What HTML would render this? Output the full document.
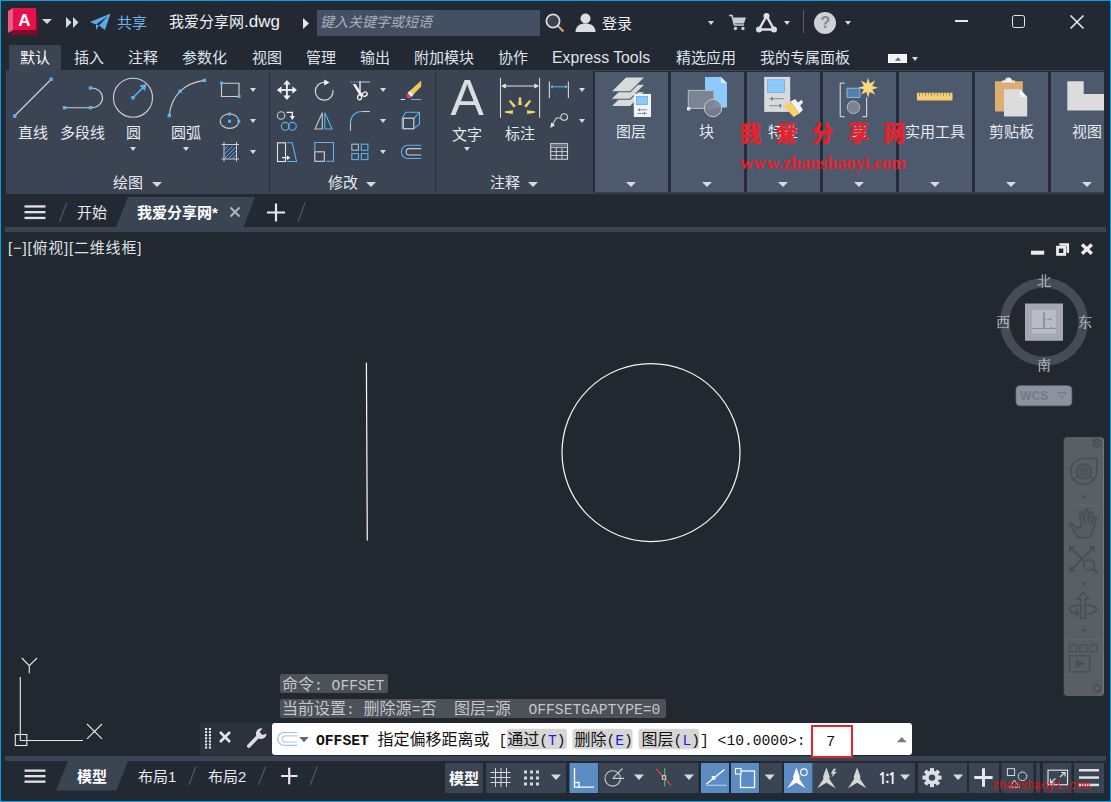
<!DOCTYPE html>
<html lang="zh-CN">
<head>
<meta charset="utf-8">
<title>我爱分享网.dwg</title>
<style>
*{box-sizing:border-box;margin:0;padding:0}
html,body{width:1111px;height:802px;overflow:hidden;background:#222933}
body{font-family:"Liberation Sans","Noto Sans CJK SC",sans-serif;color:#e8eaee;font-size:15px;position:relative}
.a{position:absolute}
.t{position:absolute;white-space:nowrap;line-height:1}
svg{position:absolute;overflow:visible}
#win{position:absolute;left:0;top:0;width:1111px;height:802px;background:#222933}
.menu{top:50px;font-size:15px;color:#dfe3ea}
.plabel{font-size:15px;color:#e6e9ee}
.panelL{position:absolute;top:72px;height:120px;background:#4d596c}
.tri{position:absolute;width:0;height:0;margin-left:.5px;border-left:3.5px solid transparent;border-right:3.5px solid transparent;border-top:4px solid #d6d9de}
.tri5{position:absolute;width:0;height:0;border-left:5px solid transparent;border-right:5px solid transparent;border-top:5px solid #d6d9de}
.tri6{position:absolute;width:0;height:0;margin-left:1px;margin-top:1px;border-left:5px solid transparent;border-right:5px solid transparent;border-top:5.500px solid #d6d9de}
.cmp{font-size:14px;color:#c8cbd0;font-family:"Liberation Serif","Noto Serif CJK SC",serif}
.cl{font-family:"Liberation Mono","Noto Sans CJK SC",monospace;font-size:14.670px;line-height:16px}
.cj{font-family:"Noto Sans CJK SC",sans-serif;font-size:16px;line-height:16px}
.k{font-style:normal;color:#1a1ae0}
.mono{font-family:"Liberation Mono","Noto Sans CJK SC",monospace}
</style>
</head>
<body>
<div id="win">
<!-- SECTION:TITLE -->
<!-- app logo -->
<svg style="left:8px;top:8px" width="31" height="28" viewBox="0 0 31 28">
<polygon points="3,3 30,5 30,27 3,27" fill="#7d0b2a"/>
<polygon points="0,3 5,0 5,22 0,25" fill="#ee5b82"/>
<rect x="5" y="0" width="23" height="22" fill="#e6114c"/>
<text x="16.5" y="18" font-family="Liberation Sans" font-weight="bold" font-size="17" fill="#fff" text-anchor="middle">A</text>
</svg>
<div class="tri5" style="left:42px;top:19px"></div>
<svg style="left:66px;top:17px" width="13" height="11" viewBox="0 0 13 11"><polygon points="0,0 5.5,5.5 0,11" fill="#d6d9de"/><polygon points="7,0 12.5,5.5 7,11" fill="#d6d9de"/></svg>
<svg style="left:90px;top:13px" width="21" height="18" viewBox="0 0 21 18"><polygon points="0,9 20.5,0.5 15,17 9,12.5 6,17 6,11.5" fill="#5aa9e8"/><polygon points="6,11.5 18,3 9,12.5" fill="#222933"/></svg>
<div class="t" style="left:117px;top:15px;font-size:15px;color:#6cb3ec">共享</div>
<div class="t" style="left:169px;top:13px;font-size:15px;color:#f0f1f4">我爱分享网<span style="font-size:17px">.dwg</span></div>
<svg style="left:303px;top:18px" width="6" height="11" viewBox="0 0 6 11"><polygon points="0,0 6,5.5 0,11" fill="#e6e8ec"/></svg>
<div class="a" style="left:317px;top:10px;width:223px;height:26px;background:#454f63"></div>
<div class="t" style="left:320px;top:15px;font-size:14px;color:#a9aeb8;font-style:italic">键入关键字或短语</div>
<svg style="left:545px;top:13px" width="21" height="20" viewBox="0 0 21 20"><line x1="12.5" y1="12.5" x2="18.5" y2="18.5" stroke="#d9a470" stroke-width="2.2"/><circle cx="8" cy="8" r="6.6" fill="#3a4250" stroke="#d8dade" stroke-width="1.8"/></svg>
<svg style="left:575px;top:13px" width="21" height="20" viewBox="0 0 21 20"><circle cx="10.5" cy="5.5" r="5" fill="#dcdee2"/><path d="M0.5 19 C0.5 13 5 10.5 10.5 10.5 C16 10.5 20.5 13 20.5 19 Z" fill="#dcdee2"/></svg>
<div class="t" style="left:602px;top:15.5px;font-size:15px;color:#f0f1f4">登录</div>
<div class="tri" style="left:707px;top:21px"></div>
<svg style="left:729px;top:14px" width="18" height="17" viewBox="0 0 18 17"><path d="M0 1.5 H3 L5.5 11 H15" fill="none" stroke="#c9ccd2" stroke-width="1.6"/><polygon points="4,3.5 17,3.5 15,9.5 5.5,9.5" fill="#c9ccd2"/><circle cx="6.5" cy="14.5" r="1.7" fill="#c9ccd2"/><circle cx="14" cy="14.5" r="1.7" fill="#c9ccd2"/></svg>
<svg style="left:755px;top:12px" width="23" height="21" viewBox="0 0 23 21"><polygon points="11.5,4 4,17.5 19,17.5" fill="none" stroke="#dcdee2" stroke-width="2.4"/><circle cx="11.5" cy="4" r="3" fill="#dcdee2"/><circle cx="4" cy="17.5" r="3" fill="#dcdee2"/><circle cx="19" cy="17.5" r="3" fill="#dcdee2"/></svg>
<div class="tri" style="left:783px;top:21px"></div>
<div class="a" style="left:803px;top:10px;width:1px;height:23px;background:#555d6a"></div>
<div class="a" style="left:814px;top:12px;width:22px;height:22px;border-radius:11px;background:#cfd1d6"></div>
<div class="t" style="left:820.500px;top:15px;font-size:16px;font-weight:bold;color:#808590">?</div>
<div class="tri" style="left:844px;top:21px"></div>
<div class="a" style="left:955px;top:20.400px;width:12.500px;height:1.500px;background:#e6e8ec"></div>
<div class="a" style="left:1012px;top:15px;width:13px;height:13px;border:1.800px solid #e6e8ec;border-radius:2.500px"></div>
<svg style="left:1070px;top:15px" width="14" height="14" viewBox="0 0 14 14"><path d="M0.5 0.5 L13.5 13.5 M13.5 0.5 L0.5 13.5" stroke="#e6e8ec" stroke-width="1.6"/></svg>
<!-- SECTION:MENU -->
<div class="a" style="left:9px;top:45px;width:52px;height:26px;background:#3b4453"></div>
<div class="t menu" style="left:20px;color:#fff">默认</div>
<div class="t menu" style="left:74px">插入</div>
<div class="t menu" style="left:128px">注释</div>
<div class="t menu" style="left:182px">参数化</div>
<div class="t menu" style="left:252px">视图</div>
<div class="t menu" style="left:306px">管理</div>
<div class="t menu" style="left:360px">输出</div>
<div class="t menu" style="left:414px">附加模块</div>
<div class="t menu" style="left:498px">协作</div>
<div class="t menu" style="left:552px;font-size:15.800px;top:50px">Express Tools</div>
<div class="t menu" style="left:676px">精选应用</div>
<div class="t menu" style="left:760px">我的专属面板</div>
<div class="a" style="left:888px;top:54px;width:19px;height:9px;background:#f2f2f2;border:1px solid #fff"></div>
<svg style="left:894.500px;top:57px" width="6" height="4" viewBox="0 0 6 4"><polygon points="0,3.700 3,0.300 6,3.700" fill="#6a6a6a"/></svg>
<div class="tri" style="left:911px;top:57px"></div>
<!-- SECTION:RIBBON -->
<div class="a" style="left:6px;top:70px;width:1098px;height:124px;background:#3b4453"></div>
<div class="a" style="left:593px;top:71px;width:511px;height:123px;background:#252c37"></div>
<div class="a" style="left:593px;top:192px;width:511px;height:1.500px;background:#343d4b"></div>
<div class="a" style="left:269px;top:72px;width:1px;height:120px;background:#2a303b"></div>
<div class="a" style="left:435px;top:72px;width:1px;height:120px;background:#2a303b"></div>
<!-- draw panel -->
<svg style="left:0;top:0" width="270" height="200" viewBox="0 0 270 200">
<g fill="none" stroke="#cbcdd2" stroke-width="1.150">
<line x1="14.5" y1="116" x2="51" y2="79.5"/>
<path d="M64.5 107.7 H90.5 C106.5 107.7 106.5 88 90.5 88"/>
<circle cx="133" cy="97.7" r="19.5"/>
<path d="M169.3 115.5 C171 96 184 83 204.4 80.4"/>
<path d="M221.5 83 V96.5 H239 M221.5 83.2 H239 V96.5"/>
<ellipse cx="229.5" cy="121.2" rx="9.3" ry="7.2"/>
<path d="M221.5 144.5 H239 M221.5 159 H239 M224 142 V161.500 M236.500 142 V161.500" stroke-width="1"/>
</g>
<line x1="133" y1="97.700" x2="143" y2="87.500" stroke="#5db1f0" stroke-width="1.600"/>
<polygon points="146.500,84 145,91 139.500,85.500" fill="#5db1f0"/>
<path d="M224 150 L228 146 M224 154.500 L232.500 146 M224.500 158.400 L236 146.900 M228.500 158.400 L236 150.900 M232.500 158.400 L236 154.900" stroke="#5db1f0" stroke-width="1"/>
<g fill="#5db1f0">
<rect x="13" y="114.500" width="3.400" height="3.400"/><rect x="49.500" y="77.500" width="3.400" height="3.400"/>
<rect x="62.800" y="106" width="3.400" height="3.400"/><rect x="88.800" y="106" width="3.400" height="3.400"/><rect x="88.800" y="86.300" width="3.400" height="3.400"/>
<rect x="131.300" y="96" width="3.400" height="3.400"/>
<rect x="167.600" y="113.800" width="3.400" height="3.400"/><rect x="178.300" y="89.500" width="3.400" height="3.400"/><rect x="202.700" y="78.700" width="3.400" height="3.400"/>
<rect x="220" y="81.500" width="3" height="3"/><rect x="237.500" y="95" width="3" height="3"/>
<rect x="228" y="112.500" width="3" height="3"/><rect x="228" y="119.700" width="3" height="3"/><rect x="237.300" y="119.700" width="3" height="3"/>
</g>
</svg>
<div class="t plabel" style="left:18px;top:125px">直线</div>
<div class="t plabel" style="left:60px;top:125px">多段线</div>
<div class="t plabel" style="left:126px;top:125px">圆</div>
<div class="t plabel" style="left:171px;top:125px">圆弧</div>
<div class="tri" style="left:129px;top:147px"></div>
<div class="tri" style="left:182px;top:147px"></div>
<div class="tri" style="left:249px;top:88px"></div>
<div class="tri" style="left:249px;top:119px"></div>
<div class="tri" style="left:249px;top:150px"></div>
<div class="t plabel" style="left:113px;top:175px">绘图</div>
<div class="tri6" style="left:151px;top:181px"></div>
<!-- RIBBON:MODIFY -->
<svg style="left:0;top:0" width="440" height="200" viewBox="0 0 440 200">
<!-- move -->
<g fill="#f2f3f5"><rect x="286" y="83" width="1.800" height="14"/><rect x="280" y="89.100" width="14" height="1.800"/>
<polygon points="286.900,80 290.600,84.600 283.200,84.600"/><polygon points="286.900,100 290.600,95.400 283.200,95.400"/>
<polygon points="276.900,90 281.500,86.300 281.500,93.700"/><polygon points="296.900,90 292.300,86.300 292.300,93.700"/></g>
<!-- rotate -->
<path d="M333 90 A8.900 8.900 0 1 1 324.500 82.400" fill="none" stroke="#d4d6da" stroke-width="1.200"/>
<polygon points="324.200,79.600 329.500,82.600 324.200,85.600" fill="#f2f3f5"/>
<!-- trim -->
<line x1="350.300" y1="82" x2="359" y2="82" stroke="#5db1f0" stroke-width="1.200" stroke-dasharray="2 1"/>
<line x1="360.500" y1="82" x2="369.800" y2="82" stroke="#aeb2b9" stroke-width="1.200"/>
<line x1="360" y1="81" x2="360" y2="91.500" stroke="#f2f3f5" stroke-width="1.400"/>
<polygon points="352.700,84 355.500,84 362.500,94.500 360,96" fill="#f2f3f5"/>
<ellipse cx="359.600" cy="97.300" rx="2" ry="2.500" fill="none" stroke="#f2f3f5" stroke-width="1.300"/>
<ellipse cx="364.800" cy="94.200" rx="2.500" ry="2" fill="none" stroke="#f2f3f5" stroke-width="1.300" transform="rotate(-30 364.800 94.200)"/>
<!-- erase -->
<polygon points="421.200,80.500 421.200,86.500 412,96 408,92.500" fill="#f2c45c"/>
<polygon points="409.800,91 413.500,94.800 411.300,97 407.600,93.200" fill="#f6f6f6"/>
<path d="M407.600 93.200 L411.300 97 C409 100 404.500 97.500 407.600 93.200Z" fill="#e8404f"/>
<line x1="400.800" y1="99.500" x2="405" y2="99.500" stroke="#e8e9ec" stroke-width="1"/>
<line x1="411" y1="99.500" x2="421.300" y2="99.500" stroke="#5db1f0" stroke-width="1"/>
<!-- copy -->
<circle cx="281.100" cy="115.500" r="3.700" fill="none" stroke="#c8cacf" stroke-width="1.100"/>
<path d="M286.500 112.400 H292.300 V116.500" fill="none" stroke="#f2f3f5" stroke-width="1.300"/>
<polygon points="289.800,116 294.800,116 292.300,120" fill="#f2f3f5"/>
<circle cx="285.200" cy="126.300" r="3.900" fill="none" stroke="#5db1f0" stroke-width="1.100"/>
<circle cx="292.400" cy="126.300" r="3.900" fill="none" stroke="#5db1f0" stroke-width="1.100"/>
<!-- mirror -->
<polygon points="315,129 322.300,129 322.300,112.800" fill="none" stroke="#c8cacf" stroke-width="1.100"/>
<polygon points="324.800,112.800 324.800,129 332,129" fill="none" stroke="#5db1f0" stroke-width="1.100"/>
<!-- fillet -->
<path d="M350.500 130.700 V122.500" fill="none" stroke="#c8cacf" stroke-width="1.100"/>
<path d="M350.500 122.500 A11 11 0 0 1 361.500 111.500" fill="none" stroke="#5db1f0" stroke-width="1.100"/>
<path d="M361.500 111.500 H369.800" fill="none" stroke="#c8cacf" stroke-width="1.100"/>
<!-- box -->
<path d="M402.200 118.200 L405.800 112.300 H419.500 V124 L414 128.700 M414 118.200 L419.500 112.300 M402.200 118.200 V128.700" fill="none" stroke="#5db1f0" stroke-width="1.100"/>
<rect x="403.300" y="118.200" width="10.500" height="10.500" fill="none" stroke="#c8cacf" stroke-width="1.300"/>
<!-- stretch -->
<rect x="277.500" y="142.800" width="8" height="18.700" fill="none" stroke="#e2e3e6" stroke-width="1.100"/>
<path d="M287.200 142.800 H292.300 L296.500 161.500 H287.200" fill="none" stroke="#5db1f0" stroke-width="1.100"/>
<line x1="282" y1="157.700" x2="288" y2="157.700" stroke="#f2f3f5" stroke-width="1.200"/>
<polygon points="287,155.500 290.300,157.700 287,159.900" fill="#f2f3f5"/>
<!-- scale -->
<path d="M314.800 151 V142.500 H333.500 V161.300 H326" fill="none" stroke="#5db1f0" stroke-width="1.100"/>
<rect x="314.800" y="151.800" width="9.500" height="9.500" fill="none" stroke="#d4d6da" stroke-width="1.100"/>
<!-- array -->
<rect x="351.800" y="144.200" width="6.600" height="6" fill="none" stroke="#aeb2b9" stroke-width="1.200"/>
<rect x="361.300" y="144.200" width="6.600" height="6" fill="none" stroke="#5db1f0" stroke-width="1.100"/>
<rect x="351.800" y="153.600" width="6.600" height="6" fill="none" stroke="#5db1f0" stroke-width="1.100"/>
<rect x="361.300" y="153.600" width="6.600" height="6" fill="none" stroke="#5db1f0" stroke-width="1.100"/>
<!-- offset -->
<path d="M421.200 145.300 H408 A6.600 6.600 0 0 0 408 158.500 H421.200" fill="none" stroke="#5db1f0" stroke-width="1.100"/>
<path d="M421.200 148.600 H409.300 A3.200 3.200 0 0 0 409.300 155 H421.200" fill="none" stroke="#c8cacf" stroke-width="1.100"/>
</svg>
<div class="tri" style="left:379px;top:88px"></div>
<div class="tri" style="left:379px;top:119px"></div>
<div class="tri" style="left:379px;top:150px"></div>
<div class="t plabel" style="left:328px;top:175px">修改</div>
<div class="tri6" style="left:365px;top:181px"></div>
<!-- RIBBON:ANNOT -->
<svg style="left:0;top:0" width="600" height="200" viewBox="0 0 600 200">
<text x="467.300" y="115.200" font-family="Liberation Sans" font-size="50" fill="#dcdde0" text-anchor="middle">A</text>
<g stroke="#d4d6da" stroke-width="1.100" fill="none">
<line x1="500.500" y1="78" x2="500.500" y2="117.800"/><line x1="539.600" y1="78" x2="539.600" y2="117.800"/>
<line x1="504" y1="86" x2="536" y2="86"/>
<line x1="549.400" y1="81.400" x2="549.400" y2="98"/><line x1="568.400" y1="81.400" x2="568.400" y2="98"/>
<circle cx="564.200" cy="117.100" r="3.300"/>
<path d="M561 118 H556.500 L552 125"/>
<rect x="550.700" y="143.600" width="16.800" height="15.600"/>
<path d="M550.700 147.600 H567.500 M550.700 151.600 H567.500 M550.700 155.500 H567.500 M556.300 147.600 V159.200 M562 147.600 V159.200" stroke-width="0.900"/>
</g>
<rect x="550.700" y="143.600" width="16.800" height="4" fill="#8d929b" opacity="0.5"/>
<polygon points="501,86 505.800,83.500 505.800,88.500" fill="#e6e7ea"/><polygon points="539.100,86 534.300,83.500 534.300,88.500" fill="#e6e7ea"/>
<polygon points="550.300,128 551.200,122.500 555,125.300" fill="#e6e7ea"/>
<line x1="551" y1="86.800" x2="567" y2="86.800" stroke="#5db1f0" stroke-width="1.100"/>
<polygon points="550,86.800 552.800,85 552.800,88.600" fill="#5db1f0"/><polygon points="567.800,86.800 565,85 565,88.600" fill="#5db1f0"/>
<g fill="#f5cf6e">
<polygon points="519,97.200 521,97.200 521.800,105 518.200,105"/>
<polygon points="508.800,101 510.500,100 516,106 513.500,107.500"/>
<polygon points="531.200,101 529.500,100 524,106 526.500,107.500"/>
<polygon points="505,111.300 505,112.800 512.800,114 513,110.300"/>
<polygon points="535,111.300 535,112.800 527.200,114 527,110.300"/>
</g>
</svg>
<div class="t plabel" style="left:452px;top:126.500px">文字</div>
<div class="t plabel" style="left:505px;top:126px">标注</div>
<div class="tri" style="left:463px;top:147px"></div>
<div class="tri" style="left:578px;top:88px"></div>
<div class="tri" style="left:578px;top:119px"></div>
<div class="t plabel" style="left:490px;top:175px">注释</div>
<div class="tri6" style="left:527px;top:181px"></div>
<!-- RIBBON:LIGHT -->
<div class="panelL" style="left:595px;width:73px"></div>
<div class="panelL" style="left:671px;width:73px"></div>
<div class="panelL" style="left:747px;width:73px"></div>
<div class="panelL" style="left:823px;width:73px"></div>
<div class="panelL" style="left:899px;width:73px"></div>
<div class="panelL" style="left:975px;width:73px"></div>
<div class="panelL" style="left:1051px;width:53px"></div>
<svg style="left:0;top:0" width="1111" height="200" viewBox="0 0 1111 200">
<!-- layers -->
<g fill="#d9dadc" stroke="#4b576b" stroke-width="1.100">
<polygon points="610.700,106.600 625.800,91.700 645.300,91.700 630.200,106.600"/>
<polygon points="610.700,99.200 625.800,84.300 645.300,84.300 630.200,99.200"/>
<polygon points="610.700,91.800 625.800,76.900 645.300,76.900 630.200,91.800"/>
</g>
<rect x="633.800" y="93.900" width="17.200" height="23.100" fill="#f2f2f3"/>
<rect x="636.400" y="96.500" width="11" height="8.200" fill="#8ccafc" stroke="#4f9ad6" stroke-width="0.600"/>
<path d="M637.500 109.800 H646.800 M637.500 113.400 H646.800" stroke="#6a7280" stroke-width="0.800"/>
<path d="M639.500 108.600 V111 M644.500 112.200 V114.600" stroke="#6a7280" stroke-width="1"/>
<!-- block -->
<polygon points="705,76.900 720.900,76.900 727,83.100 727,107.600 705,107.600" fill="#8ccafc"/>
<polygon points="720.900,76.900 727,83.100 720.900,83.100" fill="#cfe9fe"/>
<rect x="688.300" y="90.400" width="25.600" height="18" fill="#7b8494" stroke="#b9bec7" stroke-width="1"/>
<circle cx="713" cy="108" r="8.700" fill="#7b8494" fill-opacity="0.850" stroke="#c5c9d0" stroke-width="1"/>
<rect x="687" y="107.200" width="3.200" height="3.200" fill="#f2f2f3"/>
<!-- properties -->
<rect x="764.200" y="76.900" width="26" height="35" fill="#d9dadc"/>
<rect x="767.500" y="79.800" width="17.100" height="12.700" fill="#8ccafc" stroke="#5ba4de" stroke-width="0.600"/>
<path d="M769.200 98.700 H783.600 M769.200 105.700 H781.500" stroke="#6a7280" stroke-width="0.800"/>
<path d="M772 97 V100.400 M780.300 104 V107.400" stroke="#6a7280" stroke-width="1.400"/>
<polygon points="783.200,105.700 790.400,101.400 799.400,113.400 793.700,117" fill="#f5cf6e"/>
<polygon points="790.400,101.400 795.100,99 798,102.600 801.600,99.700 803,102.600 800.200,105.400 803,109.800 799.400,113.400" fill="#f2f2f3"/>
<!-- group -->
<path d="M844.600 83.100 H840.200 V116.700 H844.600 M862.400 116.700 H866.700 V97.500" fill="none" stroke="#e6e7ea" stroke-width="1"/>
<rect x="847" y="88.200" width="12.900" height="9.300" fill="#5580ad" stroke="#8ccafc" stroke-width="0.800"/>
<circle cx="853.400" cy="107.300" r="6.300" fill="#7b8494" stroke="#b9bec7" stroke-width="0.900"/>
<polygon fill="#f8d880" points="868.100,77.700 869.800,83.500 875.200,80.600 872.300,86 878.100,87.700 872.300,89.400 875.200,94.800 869.800,91.900 868.100,97.700 866.400,91.900 861,94.800 863.900,89.400 858.100,87.700 863.900,86 861,80.600 866.400,83.500"/>
<!-- ruler -->
<rect x="916.900" y="92.800" width="35.600" height="7.700" fill="#f5cf6e"/>
<path d="M919.500 92.800 V96 M922.500 92.800 V95 M925.500 92.800 V96 M928.500 92.800 V95 M931.500 92.800 V96 M934.500 92.800 V95 M937.500 92.800 V96 M940.500 92.800 V95 M943.500 92.800 V96 M946.500 92.800 V95 M949.500 92.800 V96" stroke="#a98f55" stroke-width="1"/>
<!-- clipboard -->
<rect x="995" y="81.200" width="27.800" height="30.300" fill="#dcae72"/>
<path d="M1002 82.500 V80.500 H1005 C1005 76.500 1012 76.500 1012 80.500 H1015 V82.500 Z" fill="#f2f2f3"/>
<polygon points="1004,89.300 1019.900,89.300 1027.200,97 1027.200,116.400 1004,116.400" fill="#dcdcdc"/>
<polygon points="1019.900,89.300 1027.200,97 1019.900,97" fill="#f6f6f6"/>
<!-- view -->
<polygon points="1067.300,81.200 1083.700,81.200 1083.700,94.100 1104,94.100 1104,110.600 1067.300,110.600" fill="#dcdcdc"/>
</svg>
<div class="t plabel" style="left:616px;top:124px">图层</div>
<div class="t plabel" style="left:699px;top:124px">块</div>
<div class="t plabel" style="left:768px;top:124px">特性</div>
<div class="t plabel" style="left:852px;top:124px">组</div>
<div class="t plabel" style="left:905px;top:124px">实用工具</div>
<div class="t plabel" style="left:989px;top:124px">剪贴板</div>
<div class="t plabel" style="left:1072px;top:124px;width:32px;overflow:hidden">视图</div>
<div class="tri6" style="left:625px;top:181px"></div>
<div class="tri6" style="left:701px;top:181px"></div>
<div class="tri6" style="left:777px;top:181px"></div>
<div class="tri6" style="left:853px;top:181px"></div>
<div class="tri6" style="left:929px;top:181px"></div>
<div class="tri6" style="left:1005px;top:181px"></div>
<div class="tri6" style="left:1081px;top:181px"></div>
<div class="t" id="wm1" style="left:739.500px;top:122.500px;font-family:'Liberation Sans','Noto Sans CJK SC',sans-serif;font-weight:900;font-size:22px;letter-spacing:14px;color:#e8212b">我爱分享网</div>
<div class="t" id="wm2" style="left:740px;top:153.500px;font-family:'Liberation Serif',serif;font-weight:bold;font-size:18.100px;color:#e8212b">www.zhanshaoyi.com</div>
<!-- SECTION:FILETABS -->
<div class="a" style="left:5px;top:227px;width:1101px;height:5px;background:#3b4453"></div>
<svg style="left:0;top:190px" width="400" height="45" viewBox="0 190 400 45">
<polygon points="116,227.500 128,197 255,197 243.500,227.500" fill="#3b4453"/>
<g fill="#e0e1e4"><rect x="24.500" y="205.300" width="21" height="2.300"/><rect x="24.500" y="211" width="21" height="2.300"/><rect x="24.500" y="216.800" width="21" height="2.300"/></g>
<line x1="59.500" y1="221.700" x2="66.700" y2="202.600" stroke="#4f5866" stroke-width="1.200"/>
<line x1="298" y1="221.700" x2="305.200" y2="202.600" stroke="#4f5866" stroke-width="1.200"/>
<path d="M267 212.500 H285 M276 203.500 V221.500" stroke="#e6e8ec" stroke-width="2.200"/>
<path d="M230.500 207.500 L239.500 216.500 M239.500 207.500 L230.500 216.500" stroke="#b4b8c0" stroke-width="1.800"/>
</svg>
<div class="t" style="left:77px;top:205px;font-size:15px;color:#e6e9ee">开始</div>
<div class="t" style="left:137px;top:205px;font-size:15px;font-weight:bold;color:#fff">我爱分享网*</div>
<!-- SECTION:CANVAS -->
<div class="a" style="left:1px;top:232px;width:1109px;height:524px;background:#212830"></div>
<div class="t" style="left:8px;top:240px;font-size:15px;color:#dfe1e5;letter-spacing:0.800px">[−][俯视][二维线框]</div>
<svg style="left:0;top:232px" width="1111" height="524" viewBox="0 232 1111 524">
<line x1="366.400" y1="362.700" x2="367.300" y2="540.600" stroke="#f2f2f2" stroke-width="1.250"/>
<circle cx="651" cy="452.500" r="89" fill="none" stroke="#f2f2f2" stroke-width="1.250"/>
<!-- UCS -->
<g stroke="#e8e8e8" stroke-width="1.100" fill="none">
<path d="M20.300 677 V740.500 H83"/>
<rect x="15.300" y="734.500" width="11.500" height="11"/>
<path d="M21.800 658 L29.300 665.600 L37 658 M29.300 665.600 V673.200"/>
<path d="M87 724 L102 738.800 M102 724 L87 738.800"/>
</g>
<!-- viewport controls -->
<rect x="1031" y="250.700" width="13.200" height="4" fill="#ececec"/>
<path d="M1060.600 245.500 V244.500 H1067.800 V251.700 H1066.800" fill="none" stroke="#ececec" stroke-width="2.600"/>
<rect x="1057.500" y="247.200" width="7.200" height="7.200" fill="none" stroke="#ececec" stroke-width="2.800"/>
<path d="M1082 244.500 L1091.800 253.700 M1091.800 244.500 L1082 253.700" stroke="#ececec" stroke-width="3.400"/>
<!-- compass -->
<circle cx="1044" cy="322" r="39.200" fill="none" stroke="#464c56" stroke-width="9.400"/>
<rect x="1025" y="303.500" width="38" height="37.300" fill="#a4a8b0"/>
<rect x="1031.800" y="310" width="24.200" height="23.800" fill="#b9bcc4"/>
<rect x="1016" y="385.700" width="55.800" height="20.100" rx="4" fill="#8d92a0" stroke="#6c7180" stroke-width="0.800"/>
<polygon points="1057.500,392.500 1066.500,392.500 1062,398.500" fill="none" stroke="#757a88" stroke-width="1"/>
</svg>
<div class="t" style="left:1035.500px;top:313px;font-size:18px;font-weight:500;color:#868b96;font-family:'Liberation Serif','Noto Serif CJK SC',serif">上</div>
<div class="a" style="left:1032px;top:328px;width:24px;height:1px;background:#868b96"></div>
<div class="t cmp" style="left:1037px;top:275px">北</div>
<div class="t cmp" style="left:1037px;top:359px">南</div>
<div class="t cmp" style="left:996px;top:316px">西</div>
<div class="t cmp" style="left:1078px;top:316px">东</div>
<div class="t" style="left:1020px;top:390px;font-size:12.200px;font-weight:bold;color:#757a88">WCS</div>
<!-- CANVAS:NAV -->
<div class="a" style="left:1063px;top:437px;width:41px;height:259px;background:#5a5f65;border-radius:4px;border-right:1px solid #73787e;border-left:1px solid #33383f"></div>
<svg style="left:1060px;top:432px" width="50" height="270" viewBox="1060 432 50 270">
<g fill="none" stroke="#494e56" stroke-width="1.600">
<circle cx="1096.900" cy="443.100" r="3.800"/><path d="M1094.800 441 L1099 445.200 M1099 441 L1094.800 445.200" stroke-width="1.200"/>
<path d="M1083.800 458.500 H1096.800 V471.500 A13 13 0 1 1 1083.800 458.500 Z"/>
<circle cx="1083.800" cy="471.500" r="7.500" fill="#54595f"/><circle cx="1083.800" cy="471.500" r="4.500" fill="#50555b" stroke="none"/>
<path d="M1077.500 476 L1073.500 480 M1090 476 L1094 480"/>
<line x1="1067" y1="505.400" x2="1101" y2="505.400" stroke-width="0.800" stroke="#676c72"/>
<path d="M1076 528 C1073 524 1070.500 522 1069.500 523.500 C1069 525 1073 529.500 1076.500 536 C1078 538.500 1089 538.500 1091 536 C1093.500 531 1096 522 1096.500 518.500 C1096.500 516.500 1094.500 516.500 1094 518.500 L1092 525 L1092.500 514 C1092.500 511.500 1090 511.500 1089.800 514 L1088.500 523 L1088 511.500 C1088 509 1085.300 509 1085.200 511.500 L1084.500 523 L1082.500 513.500 C1082 511 1079.500 511.500 1079.800 514 L1081 527 Z" fill="#565b61"/>
<path d="M1070.500 547.500 L1084 561 M1093.500 547.500 L1070.500 570.500" stroke-width="1.800"/>
<path d="M1070 552 V547 H1075 M1089 547 H1094 V552 M1070 566 V571 H1075" stroke-width="1.800"/>
<circle cx="1089" cy="565.200" r="5.300" fill="#5a5f65"/><line x1="1093" y1="569" x2="1097.500" y2="573.500" stroke-width="2.600"/>
<ellipse cx="1083" cy="609.500" rx="13.500" ry="4.800"/>
<path d="M1080.800 618.500 V599 H1077.500 L1083 592.500 L1088.500 599 H1085.200 V618.500 Z" fill="#5a5f65"/>
<polygon points="1073,613 1078.500,608.500 1078.500,617.500" fill="#494e56" stroke="none"/>
<line x1="1067" y1="639.400" x2="1101" y2="639.400" stroke-width="0.800" stroke="#676c72"/>
<rect x="1069.600" y="644.800" width="7" height="7" stroke-width="1.200"/><rect x="1079.700" y="644.800" width="7" height="7" stroke-width="1.200"/><rect x="1089.800" y="644.800" width="7" height="7" stroke-width="1.200"/>
<rect x="1069.600" y="655.800" width="20" height="16" stroke-width="1.400"/>
<polygon points="1075.500,659 1084.500,663.800 1075.500,668.600" fill="#494e56" stroke="none"/>
<circle cx="1096.900" cy="688.300" r="4" stroke-width="1" fill="#53585e"/><path d="M1094.300 687.200 H1099.500 L1096.900 690.300 Z" stroke="none" fill="#62676d"/>
</g>
<g fill="#494e56"><polygon points="1081.300,495.500 1087.300,495.500 1084.300,499"/><polygon points="1081.300,582.300 1087.300,582.300 1084.300,585.800"/><polygon points="1081.300,629.300 1087.300,629.300 1084.300,632.800"/></g>
</svg>
<!-- SECTION:CMD -->
<div class="a" style="left:279.500px;top:674px;width:108.500px;height:18.500px;background:#4d5158;border-radius:2px"></div>
<div class="a" style="left:279.500px;top:698.500px;width:386.500px;height:19.500px;background:#4d5158;border-radius:2px"></div>
<div class="t cl" style="left:282px;top:674.500px;color:#c3c6cb"><span class="cj">命令</span>: OFFSET</div>
<div class="t cl" style="left:282px;top:699px;color:#c3c6cb;white-space:pre"><span class="cj">当前设置</span>: <span class="cj">删除源</span>=<span class="cj">否</span>  <span class="cj">图层</span>=<span class="cj">源</span>  OFFSETGAPTYPE=0</div>
<div class="a" style="left:200px;top:723px;width:75px;height:32px;background:#2b323d;border-radius:2px 0 0 2px"></div>
<div class="a" style="left:272px;top:723px;width:640px;height:32px;background:#fff;border-radius:3px"></div>
<svg style="left:200px;top:720px" width="720" height="40" viewBox="200 720 720 40">
<g fill="#eceef0"><rect x="205.0" y="728.00" width="2.100" height="2"/><rect x="205.0" y="731.10" width="2.100" height="2"/><rect x="205.0" y="734.20" width="2.100" height="2"/><rect x="205.0" y="737.30" width="2.100" height="2"/><rect x="205.0" y="740.40" width="2.100" height="2"/><rect x="205.0" y="743.50" width="2.100" height="2"/><rect x="205.0" y="746.60" width="2.100" height="2"/><rect x="208.9" y="728.00" width="2.100" height="2"/><rect x="208.9" y="731.10" width="2.100" height="2"/><rect x="208.9" y="734.20" width="2.100" height="2"/><rect x="208.9" y="737.30" width="2.100" height="2"/><rect x="208.9" y="740.40" width="2.100" height="2"/><rect x="208.9" y="743.50" width="2.100" height="2"/><rect x="208.9" y="746.60" width="2.100" height="2"/></g>
<path d="M220 732 L230 742 M230 732 L220 742" stroke="#e4e5e8" stroke-width="2.600"/>
<path d="M248.800 746 L259.500 735" stroke="#dcdee2" stroke-width="3.600" stroke-linecap="round"/>
<path d="M262.500 728.500 A5.300 5.300 0 1 0 266.500 733.500 L262.500 735 L259.500 732 Z" fill="#dcdee2"/>
<path d="M297.200 732.500 H284 A6.400 6.400 0 0 0 284 745.300 H297.200" fill="none" stroke="#8ccafc" stroke-width="1.150"/>
<path d="M297.200 735.800 H285.300 A3.100 3.100 0 0 0 285.300 742 H297.200" fill="none" stroke="#c4c6ca" stroke-width="1.150"/>
<polygon points="299.300,737 308.800,737 304,742.300" fill="#60646b"/>
<rect x="507" y="728.700" width="60" height="20.500" rx="3" fill="#d6d6d6"/>
<rect x="572.500" y="728.700" width="60" height="20.500" rx="3" fill="#d6d6d6"/>
<rect x="638.500" y="728.700" width="60.500" height="20.500" rx="3" fill="#d6d6d6"/>
<polygon points="896.800,742.200 906.800,742.200 901.800,737" fill="#777b82"/>
</svg>
<div class="t cl" style="left:316px;top:730px;color:#111;white-space:pre"><b>OFFSET</b> <span class="cj">指定偏移距离或</span> [<span class="cj">通过</span>(<i class="k">T</i>) <span class="cj">删除</span>(<i class="k">E</i>) <span class="cj">图层</span>(<i class="k">L</i>)] &lt;10.0000&gt;:</div>
<div class="a" style="left:811px;top:724.500px;width:42px;height:33px;border:2.500px solid #e8212b;background:#fff;z-index:5"></div>
<div class="t" style="left:826.500px;top:733px;font-size:15px;color:#111;z-index:6">7</div>
<!-- SECTION:STATUS -->
<div class="a" style="left:5px;top:756px;width:1101px;height:5px;background:#3b4453"></div>
<svg style="left:0;top:756px" width="1111" height="46" viewBox="0 756 1111 46">
<polygon points="56,790.500 68,761 128,761 116.300,790.500" fill="#3b4453"/>
<g fill="#e0e1e4"><rect x="24.500" y="769.500" width="21" height="2.300"/><rect x="24.500" y="775" width="21" height="2.300"/><rect x="24.500" y="780.500" width="21" height="2.300"/></g>
<g stroke="#4f5866" stroke-width="1.200"><line x1="188.800" y1="785" x2="195.800" y2="766.700"/><line x1="258.500" y1="785" x2="265.500" y2="766.700"/><line x1="310.200" y1="785" x2="317.200" y2="766.700"/></g>
<path d="M281 776 H297.500 M289.200 767.800 V784.200" stroke="#e6e8ec" stroke-width="2.200"/>
<!-- status button backgrounds -->
<g fill="#3b4453">
<rect x="445" y="763" width="38" height="30"/><rect x="486" y="763" width="80" height="30"/>
<rect x="598.500" y="763" width="100" height="30"/><rect x="759.500" y="763" width="22.500" height="30"/>
<rect x="813" y="763" width="102" height="30"/><rect x="918" y="763" width="49" height="30"/>
<rect x="969" y="763" width="30" height="30"/><rect x="1001.500" y="763" width="32" height="30"/>
<rect x="1036" y="763" width="4" height="30"/><rect x="1043" y="763" width="28.500" height="30"/><rect x="1074" y="763" width="30" height="30"/>
</g>
<g fill="#5b8cc4"><rect x="569.500" y="763" width="28.500" height="30"/><rect x="701" y="763" width="28" height="30"/><rect x="731" y="763" width="28" height="30"/><rect x="784" y="763" width="28.500" height="30"/></g>
<!-- grid -->
<path d="M495.500 768 V787 M501 768 V787 M506.500 768 V787 M490.500 772.500 H510.500 M490.500 777.500 H510.500 M490.500 782.500 H510.500" stroke="#d6d8dc" stroke-width="1" fill="none"/>
<!-- snap dots -->
<g fill="#d6d8dc"><rect x="524" y="770.500" width="3" height="3"/><rect x="530" y="770.500" width="3" height="3"/><rect x="536" y="770.500" width="3" height="3"/><rect x="524" y="776.500" width="3" height="3"/><rect x="530" y="776.500" width="3" height="3"/><rect x="536" y="776.500" width="3" height="3"/><rect x="524" y="782.500" width="3" height="3"/><rect x="530" y="782.500" width="3" height="3"/><rect x="536" y="782.500" width="3" height="3"/></g>
<!-- ortho -->
<path d="M574.500 768 V787.200 H594 M574.500 782.500 H579 V787.200" stroke="#fff" stroke-width="1.300" fill="none"/>
<!-- polar -->
<circle cx="612.700" cy="778.400" r="7.700" fill="none" stroke="#c8cacf" stroke-width="1.100"/>
<path d="M612.700 778.400 H624 M612.700 778.400 L622.500 768.500" stroke="#c8cacf" stroke-width="1.100" fill="none"/>
<!-- isodraft -->
<line x1="664.700" y1="768" x2="664.700" y2="786.500" stroke="#3cc46a" stroke-width="1.200"/>
<line x1="656.200" y1="768.900" x2="671" y2="785.300" stroke="#e0464e" stroke-width="1.200"/>
<rect x="662.300" y="775.800" width="3.400" height="3.400" fill="#3b4453" stroke="#f0f0f0" stroke-width="0.900"/>
<!-- otrack -->
<path d="M706 785.300 H726.500" stroke="#a9c6e8" stroke-width="1.300"/>
<path d="M706.500 784 L724.500 769.500" stroke="#fff" stroke-width="1.300"/>
<rect x="711.800" y="776" width="3.600" height="3.600" fill="#fff"/>
<!-- osnap -->
<rect x="740.500" y="771" width="14" height="16.500" fill="none" stroke="#fff" stroke-width="1.300"/>
<rect x="735.500" y="768.500" width="5.500" height="5.500" fill="#5b8cc4" stroke="#fff" stroke-width="1.100"/>
<!-- annotation icons -->
<path fill="#fff" d="M796.4 767.6 L799.7 776.5 L799.4 779 L805.6 788.2 L796.4 782.8 L787.2 788.2 L793.4 779 L793.1 776.5 Z"/>
<circle cx="803.900" cy="772.200" r="3.300" fill="none" stroke="#fff" stroke-width="1.100"/>
<g fill="#d6d6d6"><path d="M826.4 767.6 L829.7 776.5 L829.4 779 L835.6 788.2 L826.4 782.8 L817.2 788.2 L823.4 779 L823.1 776.5 Z"/>
<polygon points="833.600,768.700 830.800,773.800 832.900,773.800 831.400,777.500 836.700,771.900 834.200,771.900 836.100,768.700"/>
<path d="M857.1 767.6 L860.4 776.5 L860.1 779 L866.3 788.2 L857.1 782.8 L847.9 788.2 L854.1 779 L853.8 776.5 Z"/></g>
<!-- gear -->
<g transform="translate(932 777.600)"><g fill="#dcdee2"><circle r="7"/><rect x="-2" y="-9.500" width="4" height="19"/><rect x="-2" y="-9.500" width="4" height="19" transform="rotate(45)"/><rect x="-2" y="-9.500" width="4" height="19" transform="rotate(90)"/><rect x="-2" y="-9.500" width="4" height="19" transform="rotate(135)"/></g><circle r="3.200" fill="#3b4453"/></g>
<path d="M974.300 777.500 H992.600 M983.500 768.300 V786.800" stroke="#e6e8ec" stroke-width="3"/>
<rect x="1007.400" y="768.700" width="7.200" height="6.800" fill="none" stroke="#d6d8dc" stroke-width="1"/>
<circle cx="1022.500" cy="776.300" r="4.300" fill="none" stroke="#d6d8dc" stroke-width="1"/>
<polygon points="1014.400,780 1019.500,787.200 1009.800,787.200" fill="none" stroke="#d6d8dc" stroke-width="1"/>
<rect x="1048" y="770.200" width="19.500" height="14.500" fill="none" stroke="#dcdee2" stroke-width="1.200"/>
<path d="M1060 777 L1064.500 772.800 M1061 772.500 H1065 V776.500 M1055.500 778.500 L1051 782.500 M1050.500 778.800 V782.800 H1054.500" stroke="#dcdee2" stroke-width="1.200" fill="none"/>
<g fill="#e0e1e4"><rect x="1079" y="769" width="20" height="2.500"/><rect x="1079" y="776.300" width="20" height="2.500"/><rect x="1079" y="783.700" width="20" height="2.500"/></g>
<g fill="#d6d9de"><polygon points="551.0,774.5 561.0,774.5 556.0,780"/><polygon points="634.0,774.5 644.0,774.5 639.0,780"/><polygon points="684.0,774.5 694.0,774.5 689.0,780"/><polygon points="764.7,774.5 774.7,774.5 769.7,780"/><polygon points="900.0,774.5 910.0,774.5 905.0,780"/><polygon points="953.1,774.5 963.1,774.5 958.1,780"/></g>
</svg>
<div class="t" style="left:77px;top:769px;font-size:15px;font-weight:bold;color:#fff">模型</div>
<div class="t" style="left:138px;top:769px;font-size:15px;color:#e6e9ee">布局1</div>
<div class="t" style="left:208px;top:769px;font-size:15px;color:#e6e9ee">布局2</div>
<div class="t" style="left:449px;top:770.500px;font-size:15px;font-weight:bold;color:#fff">模型</div>
<div class="t" style="left:878px;top:771px;font-family:'NanumGothic','Liberation Sans',sans-serif;font-weight:bold;font-size:15px;color:#f4f5f7;letter-spacing:-2px" id="s11">1:1</div>
<div class="t" style="left:992px;top:780px;font-family:'Liberation Mono',monospace;font-size:12px;letter-spacing:-0.200px;color:#e01010;transform:scaleY(1.120);transform-origin:0 50%">zhanshaoyi.com</div>
<!-- window border -->
<div class="a" style="left:0;top:0;width:1111px;height:1px;background:#0a9ee6"></div>
<div class="a" style="left:0;top:801px;width:1111px;height:1px;background:#0a9ee6"></div>
<div class="a" style="left:0;top:0;width:1px;height:802px;background:#0a9ee6"></div>
<div class="a" style="left:1110px;top:0;width:1px;height:802px;background:#0a9ee6"></div>
</div>
</body>
</html>
